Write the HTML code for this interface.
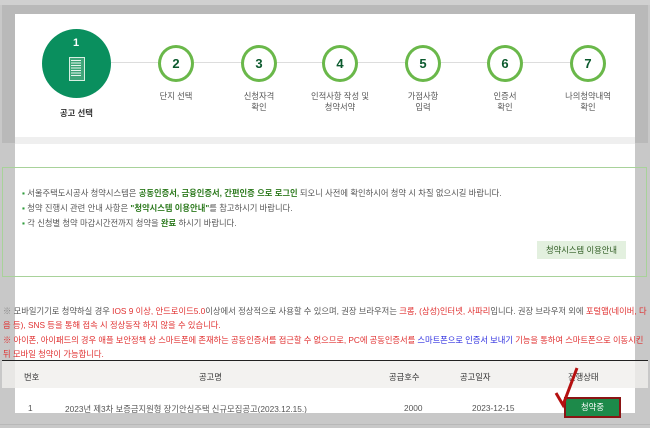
<html><head><style>
body{margin:0;width:650px;height:428px;background:#c8c8c8;position:relative;overflow:hidden;font-family:"Liberation Sans","Noto Sans CJK KR",sans-serif;}
.a{position:absolute;white-space:nowrap}
.t{font-size:8.3px;color:#555}
.step{position:absolute;width:36px;height:37px;border:3px solid #6ab84a;border-radius:50%;background:#fff;box-sizing:border-box;top:45px;text-align:center;line-height:31px;font-weight:bold;font-size:13px;color:#0c5a2e}
.lbl{position:absolute;top:91px;width:90px;text-align:center;font-size:8.3px;line-height:11px;color:#555}
.r{color:#e03030}.g{color:#2d7a1e;font-weight:bold}
</style></head><body>
<div class="a" style="left:0;top:0;width:650px;height:5px;background:#d0d0d0"></div>
<div class="a" style="left:2px;top:5px;width:646px;height:138px;background:#b9b9b9"></div>
<div class="a" style="left:15px;top:14px;width:620px;height:414px;background:#fff"></div>
<div class="a" style="left:15px;top:137px;width:620px;height:7px;background:#efefef"></div>
<div class="a" style="left:0;top:143px;width:15px;height:285px;background:#c8c8c8"></div>
<div class="a" style="left:635px;top:143px;width:15px;height:285px;background:#c8c8c8"></div>
<div class="a" style="left:110px;top:62px;width:480px;height:1px;background:#ddd"></div>
<div class="a" style="left:42px;top:29px;width:69px;height:69px;border-radius:50%;background:#0a8f5e"></div>
<div class="a" style="left:73px;top:37px;color:#fff;font-weight:bold;font-size:11px">1</div>
<div class="a" style="left:69px;top:57px;width:14px;height:22px;border:1px solid #d8efe3;background:#3fa579"></div>
<div class="a" style="left:71px;top:60px;width:10px;height:17px;background:repeating-linear-gradient(#e6f5ed 0 1px,transparent 1px 2.5px)"></div>
<div class="a" style="left:60px;top:107px;font-size:8.3px;color:#333;font-weight:bold">공고 선택</div>
<div class="step" style="left:158px">2</div><div class="step" style="left:241px">3</div><div class="step" style="left:322px">4</div><div class="step" style="left:405px">5</div><div class="step" style="left:487px">6</div><div class="step" style="left:570px">7</div>
<div class="lbl" style="left:131px">단지 선택</div>
<div class="lbl" style="left:214px">신청자격<br>확인</div>
<div class="lbl" style="left:295px">인적사항 작성 및<br>청약서약</div>
<div class="lbl" style="left:378px">가점사항<br>입력</div>
<div class="lbl" style="left:460px">인증서<br>확인</div>
<div class="lbl" style="left:543px">나의청약내역<br>확인</div>
<div class="a" style="left:2px;top:167px;width:645px;height:110px;border:1px solid #a8d29a;box-sizing:border-box"></div>
<div class="a" style="left:15px;top:168px;width:620px;height:108px;background:#fff"></div>
<div class="a t" style="left:22px;top:187px"><span style="color:#2d9a3a">▪</span> 서울주택도시공사 청약시스템은 <span class="g">공동인증서, 금융인증서, 간편인증 으로 로그인</span> 되오니 사전에 확인하시어 청약 시 차질 없으시길 바랍니다.</div>
<div class="a t" style="left:22px;top:202px"><span style="color:#2d9a3a">▪</span> 청약 진행시 관련 안내 사항은 <span class="g">"청약시스템 이용안내"</span>를 참고하시기 바랍니다.</div>
<div class="a t" style="left:22px;top:217px"><span style="color:#2d9a3a">▪</span> 각 신청별 청약 마감시간전까지 청약을 <span class="g">완료</span> 하시기 바랍니다.</div>
<div class="a" style="left:537px;top:241px;width:89px;height:18px;background:#e3f0df;font-size:8.3px;color:#2d5a20;text-align:center;line-height:18px">청약시스템 이용안내</div>
<div class="a t r" style="left:3px;top:304px;line-height:14.3px;white-space:normal;width:645px"><span style="color:#888">※</span> <span style="color:#555">모바일기기로 청약하실 경우</span> IOS 9 이상, 안드로이드5.0<span style="color:#555">이상에서 정상적으로 사용할 수 있으며, 권장 브라우저는</span> 크롬, (삼성)인터넷, 사파리<span style="color:#555">입니다. 권장 브라우저 외에 </span>포털앱(네이버, 다음 등), SNS 등을 통해 접속 시 정상동작 하지 않을 수 있습니다.<br><span style="letter-spacing:-0.05px">※ 아이폰, 아이패드의 경우 애플 보안정책 상 스마트폰에 존재하는 공동인증서를 접근할 수 없으므로, PC에 공동인증서를 <span style="color:#3030e0">스마트폰으로 인증서 보내기</span> 기능을 통하여 스마트폰으로 이동시킨</span> 뒤 모바일 청약이 가능합니다.</div>
<div class="a" style="left:2px;top:360px;width:646px;height:1px;background:#222"></div>
<div class="a" style="left:2px;top:361px;width:646px;height:27px;background:#e8e7e5"></div>
<div class="a" style="left:15px;top:361px;width:620px;height:27px;background:#f3f2f0"></div>
<div class="a t" style="left:24px;top:371px;color:#333">번호</div>
<div class="a t" style="left:199px;top:371px;color:#333">공고명</div>
<div class="a t" style="left:389px;top:371px;color:#333">공급호수</div>
<div class="a t" style="left:460px;top:371px;color:#333">공고일자</div>
<div class="a t" style="left:568px;top:371px;color:#333">진행상태</div>
<div class="a t" style="left:28px;top:403px">1</div>
<div class="a t" style="left:65px;top:403px">2023년 제3차 보증금지원형 장기안심주택 신규모집공고(2023.12.15.)</div>
<div class="a t" style="left:404px;top:403px">2000</div>
<div class="a t" style="left:472px;top:403px">2023-12-15</div>
<div class="a" style="left:0;top:413px;width:650px;height:15px;background:#c8c8c8"></div>
<div class="a" style="left:0;top:424px;width:650px;height:1px;background:#b8b8b8"></div>
<div class="a" style="left:564px;top:397px;width:57px;height:21px;background:#1d8a4a;border:2px solid #8b1414;box-sizing:border-box;color:#fff;font-size:8.3px;text-align:center;line-height:17px">청약중</div>
<svg class="a" style="left:550px;top:362px" width="40" height="50"><path d="M6 31 L13 43 L27 6" stroke="#b51010" stroke-width="3" fill="none"/></svg>
</body></html>
